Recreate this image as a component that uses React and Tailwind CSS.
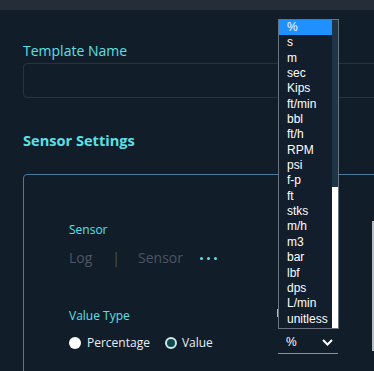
import React from "react";

const units = ["%", "s", "m", "sec", "Kips", "ft/min", "bbl", "ft/h", "RPM", "psi", "f-p", "ft", "stks", "m/h", "m3", "bar", "lbf", "dps", "L/min", "unitless"];

function UnitList() {
  return (
    <div className="absolute left-[278px] top-[19px] w-[61px] h-[310px] border border-[#6b747e] bg-[#121e2b] flex font-['Liberation_Sans',Arial,sans-serif] text-[12px] text-white">
      <div className="flex-1 flex flex-col">
        {units.map((u, i) => (
          <div key={u} className={`h-[15.35px] leading-[15.35px] pl-[8px] ${i === 0 ? "bg-[#1e90ff]" : ""}`}>
            {u}
          </div>
        ))}
      </div>
      <div className="w-[6px] flex flex-col">
        <div className="h-[167px] bg-[#1f3447]" />
        <div className="flex-1 bg-white" />
      </div>
    </div>
  );
}

export default function App() {
  return (
    <div className="relative w-[374px] h-[371px] overflow-hidden bg-[#121d2a] font-['Open_Sans',sans-serif]">
      <div className="h-[10px] bg-[#242d38]" />
      <div className="pl-[23px] pt-[31px]">
        <div className="text-[14px] leading-5 text-[#5ce0e6]">Template Name</div>
        <div className="mt-[2px] h-[35px] w-[420px] rounded border border-[#243448]" />
        <div className="mt-[30px] text-[14.6px] leading-6 font-bold text-[#5ce0e6]">Sensor Settings</div>
        <div className="mt-[22px] w-[420px] h-[250px] border border-[#4a7b9d] rounded-tl-[4px] pl-[45px] pt-[47px]">
          <div className="text-[12px] leading-4 text-[#5ce0e6]">Sensor</div>
          <div className="mt-[10px] flex items-center text-[14px] leading-5 text-[#4a5663]">
            <span>Log</span>
            <span className="ml-[20px]">|</span>
            <span className="ml-[18px]">Sensor</span>
            <span className="ml-[17px] flex gap-[4px]">
              <span className="w-[3px] h-[3px] rounded-full bg-[#5ce0e6]" />
              <span className="w-[3px] h-[3px] rounded-full bg-[#5ce0e6]" />
              <span className="w-[3px] h-[3px] rounded-full bg-[#5ce0e6]" />
            </span>
          </div>
          <div className="mt-[40px] flex">
            <div className="w-[208px]">
              <div className="text-[12px] leading-4 text-[#5ce0e6]">Value Type</div>
              <div className="mt-[9px] flex items-center text-[12px] leading-5 text-[#e8eef2]">
                <span className="w-[12px] h-[12px] rounded-full bg-white" />
                <span className="ml-[6px]">Percentage</span>
                <span className="ml-[15px] w-[12px] h-[12px] rounded-full border-2 border-[#cfe6e6] bg-[#0e4a4f]" />
                <span className="ml-[5px]">Value</span>
              </div>
            </div>
            <div className="w-[61px]">
              <div className="h-4 pt-[1px]">
                <div className="w-[2px] h-[8px] bg-[#5ce0e6]" />
              </div>
              <div className="mt-[7px] ml-[1px] h-[23px] border-b border-[#8a929a] flex items-center justify-between pl-[8px] pr-[5px] font-['Liberation_Sans',Arial,sans-serif] text-[12px] text-white">
                <span>%</span>
                <svg width="11" height="7" viewBox="0 0 11 7" fill="none" stroke="white" strokeWidth="2">
                  <path d="M1 1l4.5 4.5L10 1" />
                </svg>
              </div>
            </div>
          </div>
        </div>
      </div>
      <div className="absolute left-[372px] top-[221px] w-[2px] h-[130px] bg-[#b8bcc0]" />
      <UnitList />
    </div>
  );
}
